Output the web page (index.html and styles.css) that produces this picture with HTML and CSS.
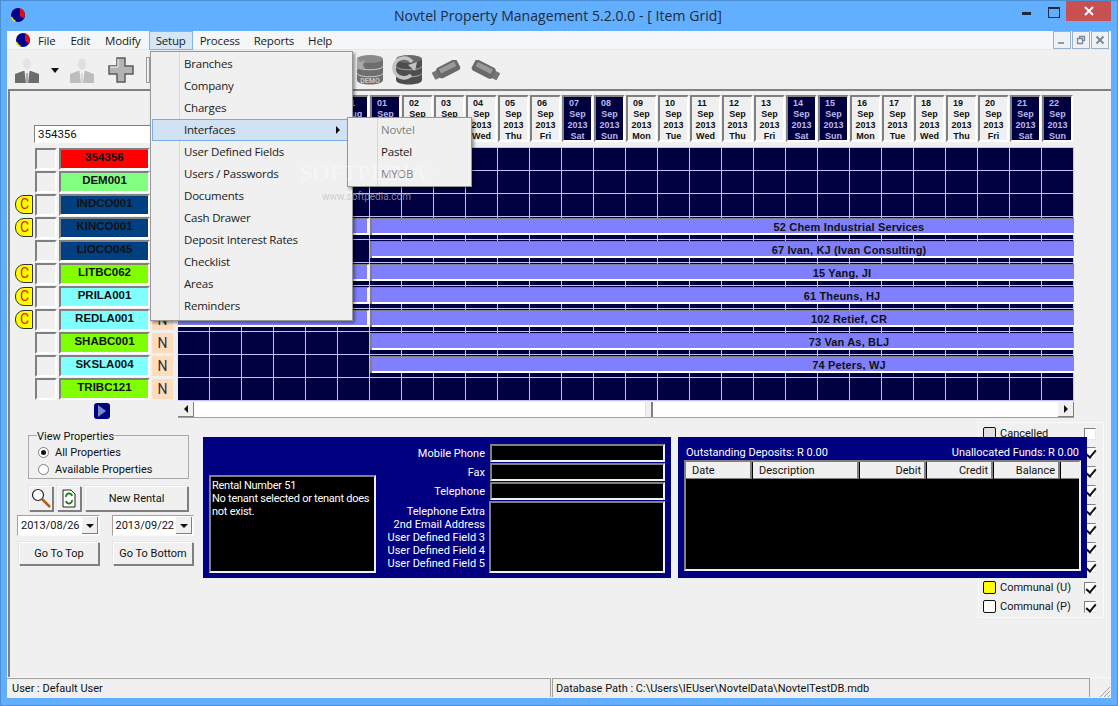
FILE: index.html
```html
<!DOCTYPE html>
<html lang="en">
<head>
    <meta charset="UTF-8">
    <title>Novtel Property Management</title>
    <link rel="stylesheet" href="styles.css">
</head>
<body>
<div class="window">
    <!-- title bar -->
    <div class="titlebar">
        <svg class="app-icon" width="16" height="16" viewBox="0 0 16 16"><circle cx="8" cy="8" r="7" fill="#000090"/><path d="M8 1a7 7 0 0 1 6 10.500L10 9V2z" fill="#e01010"/><path d="M1.500 10a7 7 0 0 0 4 4.500" fill="none" stroke="#f0e000" stroke-width="1.500"/></svg>
        <div class="title">Novtel Property Management 5.2.0.0 - [ Item Grid]</div>
        <div class="caption-buttons">
            <span class="cap-min"></span>
            <span class="cap-max"></span>
            <span class="cap-close"><svg width="12" height="10" viewBox="0 0 12 10"><path d="M2 1l8 8M10 1l-8 8" stroke="#fff" stroke-width="2"/></svg></span>
        </div>
    </div>

    <div class="mdi">
        <!-- menu -->
        <div class="menubar">
            <svg class="menu-icon" width="16" height="16" viewBox="0 0 16 16"><circle cx="8" cy="8" r="7" fill="#000090"/><path d="M8 1a7 7 0 0 1 6 10.500L10 9V2z" fill="#e01010"/><path d="M1.500 10a7 7 0 0 0 4 4.500" fill="none" stroke="#f0e000" stroke-width="1.500"/></svg>
            <span class="menu-item menu-wide">File</span>
            <span class="menu-item menu-wide">Edit</span>
            <span class="menu-item menu-wide">Modify</span>
            <span class="menu-item menu-active">Setup</span>
            <span class="menu-item">Process</span>
            <span class="menu-item">Reports</span>
            <span class="menu-item">Help</span>
            <div class="mdi-buttons">
                <span class="mdi-btn"><svg width="10" height="10" viewBox="0 0 10 10"><rect x="1" y="7" width="6" height="2" fill="#8a9aa8"/></svg></span>
                <span class="mdi-btn"><svg width="10" height="10" viewBox="0 0 10 10"><path d="M3.500 3V1.500h5v4H7M1.500 3.500h5v5h-5z" fill="none" stroke="#7a8a98" stroke-width="1.300"/></svg></span>
                <span class="mdi-btn"><svg width="10" height="10" viewBox="0 0 10 10"><path d="M1.500 1.500l7 7M8.500 1.500l-7 7" stroke="#7a8a98" stroke-width="2"/></svg></span>
            </div>
        </div>

        <!-- toolbar -->
        <div class="toolbar">
            <svg class="tool-person" width="24" height="26" viewBox="0 0 24 26"><ellipse cx="12" cy="6" rx="4" ry="5.500" fill="#e4e4e4"/><path d="M0 25V16l8-3h8l8 3v9z" fill="#6c6c6c"/><path d="M9.500 13h5L13 25h-2z" fill="#f0f0f0"/><path d="M12 15v10" stroke="#6c6c6c"/></svg>
            <span class="tool-arrow"></span>
            <svg class="tool-person2" width="24" height="26" viewBox="0 0 24 26"><ellipse cx="12" cy="6" rx="4" ry="5.500" fill="#dedede"/><path d="M0 25V16l8-3h8l8 3v9z" fill="#bdbdbd"/><path d="M9.500 13h5L13 25h-2z" fill="#f4f4f4"/><path d="M12 15v10" stroke="#bdbdbd"/></svg>
            <svg class="tool-plus" width="26" height="26" viewBox="0 0 26 26"><path d="M9 1h8v8h8v8h-8v8H9v-8H1V9h8z" fill="#b4b4b4" stroke="#5c5c5c" stroke-width="1.500"/><path d="M10 2v8H2" fill="none" stroke="#fff"/></svg>
            <span class="tool-clipped"></span>
            <svg class="tool-db" width="28" height="31" viewBox="0 0 28 31"><path d="M1 5v21c0 6 26 6 26 0V5z" fill="#6e6e6e"/><ellipse cx="14" cy="5" rx="13" ry="4" fill="#8a8a8a"/><path d="M1 12c0 5 26 5 26 0M1 19c0 5 26 5 26 0" fill="none" stroke="#d0d0d0"/><path d="M1 3l3 5 5-2-2 5 2 4-5-1-3 2z" fill="#a8a8a8"/><text x="14" y="29" class="db-text">DEMO</text></svg>
            <svg class="tool-db2" width="32" height="31" viewBox="0 0 32 31"><path d="M5 5v21c0 6 26 6 26 0V5z" fill="#4e4e4e"/><ellipse cx="18" cy="5" rx="13" ry="4" fill="#6a6a6a"/><path d="M5 12c0 5 26 5 26 0M5 19c0 5 26 5 26 0" fill="none" stroke="#a8a8a8"/><path d="M20 21A10 10 0 1 1 21 8" fill="none" stroke="#c4c4c4" stroke-width="3.500"/><path d="M17 11l9-3-2 9z" fill="#c4c4c4"/></svg>
            <svg class="tool-usb" width="29" height="20" viewBox="0 0 29 20"><g transform="rotate(-27 14 10)"><rect x="0" y="6" width="7" height="8" rx="1" fill="#777"/><rect x="5" y="4" width="23" height="12" rx="3" fill="#6a6a6a"/><rect x="8" y="6" width="17" height="5" fill="#9a9a9a"/></g></svg>
            <svg class="tool-usb2" width="29" height="20" viewBox="0 0 29 20"><g transform="rotate(27 14 10)"><rect x="22" y="6" width="7" height="8" rx="1" fill="#777"/><rect x="1" y="4" width="23" height="12" rx="3" fill="#6a6a6a"/><rect x="4" y="6" width="17" height="5" fill="#9a9a9a"/></g></svg>
        </div>

        <div class="content">
            <!-- item grid -->
            <div class="board">
                <div class="items">
                    <div class="search">354356</div>
                    <div class="item-row"><span class="badge-slot"></span><span class="tick-cell"></span><span class="code c-red">354356</span><span class="n-cell">N</span></div>
                    <div class="item-row"><span class="badge-slot"></span><span class="tick-cell"></span><span class="code c-mint">DEM001</span><span class="n-cell">N</span></div>
                    <div class="item-row"><span class="badge-slot badge">C</span><span class="tick-cell"></span><span class="code c-navy">INDCO001</span><span class="n-cell">N</span></div>
                    <div class="item-row"><span class="badge-slot badge">C</span><span class="tick-cell"></span><span class="code c-navy">KINCO001</span><span class="n-cell">N</span></div>
                    <div class="item-row"><span class="badge-slot"></span><span class="tick-cell"></span><span class="code c-navy">LIOCO045</span><span class="n-cell">N</span></div>
                    <div class="item-row"><span class="badge-slot badge">C</span><span class="tick-cell"></span><span class="code c-lime">LITBC062</span><span class="n-cell">N</span></div>
                    <div class="item-row"><span class="badge-slot badge">C</span><span class="tick-cell"></span><span class="code c-cyan">PRILA001</span><span class="n-cell">N</span></div>
                    <div class="item-row"><span class="badge-slot badge">C</span><span class="tick-cell"></span><span class="code c-cyan">REDLA001</span><span class="n-cell">N</span></div>
                    <div class="item-row"><span class="badge-slot"></span><span class="tick-cell"></span><span class="code c-lime">SHABC001</span><span class="n-cell">N</span></div>
                    <div class="item-row"><span class="badge-slot"></span><span class="tick-cell"></span><span class="code c-cyan">SKSLA004</span><span class="n-cell">N</span></div>
                    <div class="item-row"><span class="badge-slot"></span><span class="tick-cell"></span><span class="code c-lime">TRIBC121</span><span class="n-cell">N</span></div>
                    <div class="next-wrap"><span class="next-btn"><svg width="8" height="12" viewBox="0 0 8 12"><path d="M0 0l8 6-8 6z" fill="#7a86c8"/></svg></span></div>
                </div>

                <div class="schedule">
                    <div class="days">
                        <div class="day"><b>26</b>Aug<br>2013<br>Mon</div>
                        <div class="day"><b>27</b>Aug<br>2013<br>Tue</div>
                        <div class="day"><b>28</b>Aug<br>2013<br>Wed</div>
                        <div class="day"><b>29</b>Aug<br>2013<br>Thu</div>
                        <div class="day"><b>30</b>Aug<br>2013<br>Fri</div>
                        <div class="day off"><b>31</b>Aug<br>2013<br>Sat</div>
                        <div class="day off"><b>01</b>Sep<br>2013<br>Sun</div>
                        <div class="day"><b>02</b>Sep<br>2013<br>Mon</div>
                        <div class="day"><b>03</b>Sep<br>2013<br>Tue</div>
                        <div class="day"><b>04</b>Sep<br>2013<br>Wed</div>
                        <div class="day"><b>05</b>Sep<br>2013<br>Thu</div>
                        <div class="day"><b>06</b>Sep<br>2013<br>Fri</div>
                        <div class="day off"><b>07</b>Sep<br>2013<br>Sat</div>
                        <div class="day off"><b>08</b>Sep<br>2013<br>Sun</div>
                        <div class="day"><b>09</b>Sep<br>2013<br>Mon</div>
                        <div class="day"><b>10</b>Sep<br>2013<br>Tue</div>
                        <div class="day"><b>11</b>Sep<br>2013<br>Wed</div>
                        <div class="day"><b>12</b>Sep<br>2013<br>Thu</div>
                        <div class="day"><b>13</b>Sep<br>2013<br>Fri</div>
                        <div class="day off"><b>14</b>Sep<br>2013<br>Sat</div>
                        <div class="day off"><b>15</b>Sep<br>2013<br>Sun</div>
                        <div class="day"><b>16</b>Sep<br>2013<br>Mon</div>
                        <div class="day"><b>17</b>Sep<br>2013<br>Tue</div>
                        <div class="day"><b>18</b>Sep<br>2013<br>Wed</div>
                        <div class="day"><b>19</b>Sep<br>2013<br>Thu</div>
                        <div class="day"><b>20</b>Sep<br>2013<br>Fri</div>
                        <div class="day off"><b>21</b>Sep<br>2013<br>Sat</div>
                        <div class="day off"><b>22</b>Sep<br>2013<br>Sun</div>
                    </div>
                    <div class="lanes">
                        <div class="lane"></div>
                        <div class="lane"></div>
                        <div class="lane"></div>
                        <div class="lane"><div class="bar-past"></div><div class="bar">52 Chem Industrial Services</div></div>
                        <div class="lane"><div class="bar-gap"></div><div class="bar">67 Ivan, KJ (Ivan Consulting)</div></div>
                        <div class="lane"><div class="bar-past"></div><div class="bar short">15 Yang, JI</div></div>
                        <div class="lane"><div class="bar-past"></div><div class="bar short">61 Theuns, HJ</div></div>
                        <div class="lane"><div class="bar-past"></div><div class="bar">102 Retief, CR</div></div>
                        <div class="lane"><div class="bar-gap"></div><div class="bar">73 Van As, BLJ</div></div>
                        <div class="lane"><div class="bar-gap"></div><div class="bar">74 Peters, WJ</div></div>
                        <div class="lane"></div>
                    </div>
                    <div class="hscroll">
                        <span class="scroll-btn"><i class="arrow-left"></i></span>
                        <span class="scroll-track"><span class="scroll-thumb"></span></span>
                        <span class="scroll-btn"><i class="arrow-right"></i></span>
                    </div>
                </div>
            </div>

            <!-- lower panels -->
            <div class="lower">
                <div class="controls">
                    <fieldset class="view-props">
                        <legend>View Properties</legend>
                        <div class="radio-row"><span class="radio checked"></span>All Properties</div>
                        <div class="radio-row"><span class="radio"></span>Available Properties</div>
                    </fieldset>
                    <div class="action-row">
                        <span class="btn btn-icon"><svg width="20" height="21" viewBox="0 0 20 21"><circle cx="7" cy="7" r="5.500" fill="#fff" stroke="#222" stroke-width="1.200"/><path d="M11 11l8 8" stroke="#b06018" stroke-width="2.500"/></svg></span>
                        <span class="btn btn-icon"><svg width="14" height="19" viewBox="0 0 14 19"><path d="M1 1h8l4 4v13H1z" fill="#fff" stroke="#222"/><path d="M4 8a3 3 0 0 1 6-1M10 11a3 3 0 0 1-6 1" fill="none" stroke="#108010" stroke-width="1.800"/></svg></span>
                        <span class="btn btn-new">New Rental</span>
                    </div>
                    <div class="date-row">
                        <span class="combo">2013/08/26<i class="combo-btn"></i></span>
                        <span class="combo">2013/09/22<i class="combo-btn"></i></span>
                    </div>
                    <div class="goto-row">
                        <span class="btn btn-goto">Go To Top</span>
                        <span class="btn btn-goto">Go To Bottom</span>
                    </div>
                </div>

                <div class="panel tenant-panel">
                    <div class="tenant-memo">Rental Number 51<br>No tenant selected or tenant does not exist.</div>
                    <div class="contact">
                        <div class="contact-row"><label>Mobile Phone</label><span class="field"></span></div>
                        <div class="contact-row"><label>Fax</label><span class="field"></span></div>
                        <div class="contact-row"><label>Telephone</label><span class="field"></span></div>
                        <div class="contact-row contact-big">
                            <label>Telephone Extra<br>2nd Email Address<br>User Defined Field 3<br>User Defined Field 4<br>User Defined Field 5</label>
                            <span class="field field-big"></span>
                        </div>
                    </div>
                </div>

                <div class="panel funds-panel">
                    <div class="funds-head"><span>Outstanding Deposits: R 0.00</span><span>Unallocated Funds: R 0.00</span></div>
                    <div class="ledger">
                        <div class="ledger-head">
                            <span class="col-date">Date</span>
                            <span class="col-desc">Description</span>
                            <span class="col-num">Debit</span>
                            <span class="col-num">Credit</span>
                            <span class="col-num">Balance</span>
                            <span class="col-end"></span>
                        </div>
                    </div>
                </div>

                <div class="legend-box">
                    <div class="key"><span class="swatch s-grey"></span><span class="key-name">Cancelled</span><span class="check"></span></div>
                    <div class="key"><span class="check on"></span></div>
                    <div class="key"><span class="check on"></span></div>
                    <div class="key"><span class="check on"></span></div>
                    <div class="key"><span class="check on"></span></div>
                    <div class="key"><span class="check on"></span></div>
                    <div class="key"><span class="check on"></span></div>
                    <div class="key"><span class="check on"></span></div>
                    <div class="key key-u"><span class="swatch s-yellow"></span><span class="key-name">Communal (U)</span><span class="check on"></span></div>
                    <div class="key"><span class="swatch"></span><span class="key-name">Communal (P)</span><span class="check on"></span></div>
                </div>
            </div>

            <!-- open Setup menu -->
            <div class="dropdown">
                <div class="drop-item">Branches</div>
                <div class="drop-item">Company</div>
                <div class="drop-item">Charges</div>
                <div class="drop-item drop-hot">Interfaces<i class="drop-arrow"></i></div>
                <div class="drop-item">User Defined Fields</div>
                <div class="drop-item">Users / Passwords</div>
                <div class="drop-item">Documents</div>
                <div class="drop-item">Cash Drawer</div>
                <div class="drop-item">Deposit Interest Rates</div>
                <div class="drop-item">Checklist</div>
                <div class="drop-item">Areas</div>
                <div class="drop-item">Reminders</div>
            </div>
            <div class="submenu">
                <div class="sub-item sub-off">Novtel</div>
                <div class="sub-item">Pastel</div>
                <div class="sub-item sub-off">MYOB</div>
            </div>
            <div class="watermark">SOFTPEDIA<sup>™</sup></div>
            <div class="watermark-url">www.softpedia.com</div>
        </div>

        <!-- status bar -->
        <div class="statusbar">
            <span class="status-user">User : Default User</span>
            <span class="status-db">Database Path : C:\Users\IEUser\NovtelData\NovtelTestDB.mdb</span>
            <svg class="grip" width="12" height="12" viewBox="0 0 12 12"><path d="M11 1L1 11M11 5l-6 6M11 9l-2 2" stroke="#a0a0a0"/></svg>
        </div>
    </div>
</div>
</body>
</html>
```

FILE: styles.css
```css
* {
    box-sizing: border-box;
}
html, body {
    margin: 0;
    padding: 0;
}
body {
    width: 1118px;
    height: 706px;
    overflow: hidden;
    font-family: Roboto, "Liberation Sans", sans-serif;
    font-size: 11px;
    color: #111;
}
.window {
    width: 1118px;
    height: 706px;
    background-color: #62aeff;
    border: 1px solid #4a8fd4;
    display: flex;
    flex-direction: column;
}
.titlebar {
    height: 30px;
    display: flex;
    align-items: flex-start;
    position: relative;
}
.app-icon {
    margin: 6px 0 0 9px;
}
.title {
    position: absolute;
    left: 393px;
    top: 5px;
    font-family: "Open Sans", sans-serif;
    font-size: 14px;
    letter-spacing: 0.05px;
    line-height: 20px;
    color: #1d2b38;
    white-space: nowrap;
}
.caption-buttons {
    margin-left: auto;
    margin-right: 6px;
    display: flex;
    height: 20px;
}
.cap-min, .cap-max {
    width: 27px;
    position: relative;
}
.cap-min::after {
    content: "";
    position: absolute;
    left: 10px;
    top: 11px;
    width: 9px;
    height: 3px;
    background-color: #1d2b38;
}
.cap-max::after {
    content: "";
    position: absolute;
    left: 9px;
    top: 6px;
    width: 10px;
    height: 8px;
    border: 1px solid #1d2b38;
    border-top-width: 2px;
}
.cap-close {
    width: 45px;
    background-color: #c75050;
    display: flex;
    align-items: center;
    justify-content: center;
}

.mdi {
    margin: 0 6px 7px 6px;
    height: 667px;
    background-color: #f0f0f0;
    display: flex;
    flex-direction: column;
}
.menubar {
    height: 19px;
    background-color: #f5f6f7;
    display: flex;
    align-items: center;
    border-bottom: 1px solid #e8e8e8;
}
.menu-icon {
    margin-left: 8px;
}
.menu-item {
    padding: 0 7px;
    line-height: 19px;
    height: 19px;
    font-family: "Open Sans", sans-serif;
    font-size: 11.500px;
    letter-spacing: -0.2px;
    color: #1a1a1a;
}
.menu-wide {
    padding-right: 8px;
}
.menu-active {
    background-color: #d5e6f7;
    box-shadow: inset 0 0 0 1px #7eb4ea;
}
.mdi-buttons {
    margin-left: auto;
    margin-right: 2px;
    display: flex;
    gap: 1px;
}
.mdi-btn {
    width: 18px;
    height: 18px;
    border: 1px solid #9ab2c8;
    background-color: #eef2f6;
    display: flex;
    align-items: center;
    justify-content: center;
}

.toolbar {
    height: 39px;
    display: flex;
    align-items: flex-start;
    background-color: #f0f0f0;
}
.toolbar svg {
    flex: none;
}
.tool-person {
    margin: 8px 0 0 8px;
}
.tool-arrow {
    margin: 18px 0 0 12px;
    width: 0;
    height: 0;
    border-left: 4px solid transparent;
    border-right: 4px solid transparent;
    border-top: 5px solid #111;
}
.tool-person2 {
    margin: 8px 0 0 11px;
}
.tool-plus {
    margin: 7px 0 0 14px;
}
.tool-clipped {
    margin: 7px 0 0 12px;
    width: 4px;
    height: 26px;
    border: 1px solid #9a9a9a;
}
.tool-db {
    margin: 4px 0 0 206px;
}
.tool-db2 {
    margin: 4px 0 0 7px;
}
.tool-usb {
    margin: 10px 0 0 9px;
}
.tool-usb2 {
    margin: 10px 0 0 10px;
}
.db-text {
    font-size: 7px;
    font-weight: bold;
    fill: #c8c8c8;
    text-anchor: middle;
}

.content {
    flex: 1;
    position: relative;
    margin-left: 1px;
    border-top: 2px solid #808080;
    border-left: 2px solid #808080;
}
.board {
    display: flex;
    padding-top: 4px;
}
.items {
    width: 168px;
    flex: none;
}
.search {
    margin: 30px 0 5px 24px;
    height: 18px;
    width: 140px;
    background-color: #fff;
    border: 1px solid;
    border-color: #808080 #fff #fff #808080;
    padding-left: 3px;
    line-height: 17px;
    font-size: 11.500px;
}
.item-row {
    height: 23px;
    display: flex;
    align-items: flex-start;
}
.badge-slot {
    width: 18px;
    height: 19px;
    margin: 1px 2px 0 5px;
    flex: none;
}
.badge {
    background-color: #ffff00;
    border: 1px solid #333;
    border-radius: 9px 1px 1px 9px;
    color: #e02000;
    font-size: 14px;
    line-height: 17px;
    text-align: center;
    padding-left: 1px;
}
.tick-cell {
    width: 22px;
    height: 22px;
    flex: none;
    border: 2px solid;
    border-color: #808080 #fff #fff #808080;
}
.code {
    width: 91px;
    height: 22px;
    flex: none;
    margin-left: 2px;
    border: 2px solid;
    border-color: #808080 #fff #fff #808080;
    font-family: "Liberation Sans", sans-serif;
    font-weight: bold;
    font-size: 11.500px;
    line-height: 15px;
    text-align: center;
}
.c-red { background-color: #ff0000; }
.c-mint { background-color: #80ff80; }
.c-navy { background-color: #004080; }
.c-lime { background-color: #80ff00; }
.c-cyan { background-color: #80ffff; }
.n-cell {
    width: 23px;
    height: 22px;
    flex: none;
    margin-left: 1px;
    background-color: #ffdcbc;
    border: 1px solid #f0f0f0;
    font-size: 14px;
    line-height: 21px;
    text-align: center;
    color: #333;
}
.next-wrap {
    height: 17px;
    padding: 2px 0 0 84px;
}
.next-btn {
    display: flex;
    width: 16px;
    height: 16px;
    background-color: #000080;
    border-radius: 3px;
    align-items: center;
    justify-content: center;
}

.schedule {
    width: 896px;
    flex: none;
}
.days {
    display: flex;
    height: 48px;
}
.day {
    width: 31px;
    height: 47px;
    margin-right: 1px;
    border: 2px solid;
    border-color: #808080 #fff #fff #808080;
    background-color: #f0f0f0;
    font-family: "Liberation Sans", sans-serif;
    font-size: 9px;
    line-height: 11px;
    text-align: center;
    color: #111;
    font-weight: bold;
    padding-top: 1px;
    overflow: hidden;
}
.day b {
    display: block;
    padding-right: 7px;
}
.day.off {
    background-color: #000040;
    color: #b8b8e8;
}
.lanes {
    margin-top: 4px;
    border-top: 1px solid #c0c0ff;
    background-color: #000040;
    background-image:
        linear-gradient(90deg, transparent 31px, #c0c0ff 31px),
        linear-gradient(180deg, transparent 22px, #c0c0ff 22px);
    background-size: 32px 23px;
}
.lane {
    height: 23px;
    padding-top: 1px;
    display: flex;
    align-items: flex-start;
}
.bar-past {
    width: 192px;
    height: 17px;
    background-color: #8080ff;
    border-right: 3px solid #f4f4f4;
    border-bottom: 2px solid #fff;
    border-top: 1px solid #808080;
    flex: none;
}
.bar-gap {
    width: 192px;
    flex: none;
}
.bar {
    flex: 1;
    height: 17px;
    background-color: #8080ff;
    border: solid #808080;
    border-width: 1px 0 0 2px;
    box-shadow: inset 0 -2px 0 #fff;
    font-family: "Liberation Sans", sans-serif;
    font-weight: bold;
    font-size: 11px;
    letter-spacing: 0.15px;
    line-height: 17px;
    color: #111;
    text-align: center;
    padding-left: 252px;
}
.bar.short {
    padding-left: 238px;
}
.hscroll {
    margin-top: 1px;
    height: 16px;
    display: flex;
    border-bottom: 1px solid #a0a0a0;
    background-color: #fff;
}
.scroll-btn {
    width: 16px;
    flex: none;
    height: 15px;
    background-color: #f0f0f0;
    border-right: 1px solid #808080;
    border-bottom: 1px solid #808080;
    display: flex;
    align-items: center;
    justify-content: center;
}
.arrow-left, .arrow-right {
    width: 0;
    height: 0;
    border-top: 4px solid transparent;
    border-bottom: 4px solid transparent;
}
.arrow-left {
    border-right: 4px solid #111;
}
.arrow-right {
    border-left: 4px solid #111;
}
.scroll-track {
    flex: 1;
    display: block;
    padding-left: 451px;
}
.scroll-thumb {
    display: block;
    width: 8px;
    height: 15px;
    background-color: #f0f0f0;
    border-right: 2px solid #808080;
    border-left: 1px solid #e0e0e0;
}

.lower {
    display: flex;
    align-items: flex-start;
    padding: 4px 0 0 7px;
}
.controls {
    width: 177px;
    flex: none;
    margin-top: 7px;
}
.view-props {
    margin: 0 0 0 11px;
    width: 161px;
    height: 50px;
    padding: 2px 0 0 9px;
    border: 1px solid #a8a8a8;
}
.view-props legend {
    padding: 0;
    line-height: 13px;
    margin-left: -1px;
    position: relative;
    top: 1px;
}
.radio-row {
    display: flex;
    align-items: center;
    height: 17px;
}
.radio {
    width: 11px;
    height: 11px;
    border: 1px solid #808080;
    border-radius: 50%;
    background-color: #fff;
    margin-right: 6px;
    position: relative;
}
.radio.checked::after {
    content: "";
    position: absolute;
    left: 2px;
    top: 2px;
    width: 5px;
    height: 5px;
    border-radius: 50%;
    background-color: #111;
}
.btn {
    display: flex;
    align-items: center;
    justify-content: center;
    background-color: #f0f0f0;
    border: 1px solid;
    border-color: #fff #808080 #808080 #fff;
    box-shadow: 1px 1px 0 #808080, -1px -1px 0 #e4e4e4;
}
.action-row {
    display: flex;
    margin: 7px 0 0 12px;
    gap: 4px;
}
.btn-icon {
    width: 24px;
    height: 25px;
}
.btn-new {
    width: 103px;
    height: 25px;
}
.date-row {
    display: flex;
    gap: 12px;
    margin-top: 4px;
}
.combo {
    width: 83px;
    height: 21px;
    background-color: #fff;
    border: 1px solid;
    border-color: #a0a0a0 #f8f8f8 #f8f8f8 #a0a0a0;
    display: flex;
    align-items: center;
    padding-left: 3px;
    justify-content: space-between;
    padding-right: 1px;
}
.combo-btn {
    width: 16px;
    height: 17px;
    background-color: #f0f0f0;
    border-right: 1px solid #808080;
    border-bottom: 1px solid #808080;
    position: relative;
}
.combo-btn::after {
    content: "";
    position: absolute;
    left: 4px;
    top: 7px;
    border-left: 4px solid transparent;
    border-right: 4px solid transparent;
    border-top: 4px solid #111;
}
.goto-row {
    display: flex;
    gap: 14px;
    margin: 6px 0 0 2px;
}
.btn-goto {
    width: 80px;
    height: 23px;
}

.panel {
    position: relative;
    z-index: 1;
    margin-top: 15px;
    height: 141px;
    background-color: #000080;
    color: #fff;
    flex: none;
}
.tenant-panel {
    width: 468px;
    margin-left: 9px;
    padding: 7px 6px 5px 6px;
    display: flex;
    align-items: flex-end;
}
.tenant-memo {
    width: 167px;
    height: 98px;
    flex: none;
    background-color: #000;
    border: 2px solid;
    border-color: #808080 #f0f0f0 #f0f0f0 #808080;
    padding: 2px 0 0 1px;
    line-height: 13px;
    letter-spacing: -0.25px;
}
.contact {
    flex: 1;
    display: flex;
    flex-direction: column;
    gap: 1px;
}
.contact-row {
    display: flex;
    align-items: center;
    justify-content: flex-end;
    height: 18px;
}
.contact-row label {
    margin-right: 5px;
    text-align: right;
}
.field {
    width: 175px;
    height: 18px;
    background-color: #000;
    border: 2px solid;
    border-color: #808080 #f0f0f0 #f0f0f0 #808080;
}
.contact-big {
    height: 72px;
}
.contact-big label {
    line-height: 13px;
    margin-right: 4px;
    padding-top: 1px;
}
.field-big {
    width: 176px;
    height: 72px;
}
.funds-panel {
    width: 409px;
    margin-left: 7px;
    padding: 8px 6px 0 6px;
}
.funds-head {
    display: flex;
    justify-content: space-between;
    padding: 0 2px;
    height: 15px;
    line-height: 15px;
}
.ledger {
    height: 111px;
    background-color: #000;
    border: 2px solid;
    border-color: #808080 #f0f0f0 #f0f0f0 #808080;
}
.ledger-head {
    display: flex;
    height: 17px;
    color: #111;
    line-height: 18px;
}
.ledger-head span {
    background-color: #f0f0f0;
    border-right: 2px solid #808080;
    border-bottom: 1px solid #808080;
    margin-right: 1px;
}
.col-date {
    width: 66px;
    padding-left: 6px;
}
.col-desc {
    width: 106px;
    padding-left: 6px;
}
.col-num {
    width: 66px;
    text-align: right;
    padding-right: 3px;
}
.ledger-head .col-end {
    flex: 1;
    margin-right: 0;
    border-right: 0;
}

.legend-box {
    margin-left: -109px;
    width: 126px;
    height: 196px;
    flex: none;
    border: 1px solid #fafafa;
    padding: 1px 7px 0 4px;
}
.key {
    height: 19px;
    display: flex;
    align-items: center;
    justify-content: flex-end;
}
.key-u {
    margin-top: 2px;
}
.key-name {
    flex: 1;
    padding-left: 4px;
}
.swatch {
    width: 13px;
    height: 13px;
    flex: none;
    border: 1px solid #111;
    border-radius: 2px;
    background-color: #fff;
}
.s-grey {
    background-color: #e0e0e0;
}
.s-yellow {
    background-color: #ffff00;
}
.check {
    width: 12px;
    height: 12px;
    flex: none;
    border: 1px solid;
    border-color: #808080 #e8e8e8 #e8e8e8 #808080;
    background-color: #fff;
    position: relative;
}
.check.on::after {
    content: "";
    position: absolute;
    left: 3px;
    top: 0;
    width: 4px;
    height: 8px;
    border: solid #111;
    border-width: 0 2px 2px 0;
    transform: rotate(40deg);
}

.dropdown, .submenu {
    position: absolute;
    z-index: 5;
    background-color: #f0f0f0;
    border: 1px solid #979797;
    box-shadow: 2px 2px 3px rgba(0, 0, 0, 0.4);
    font-family: "Open Sans", sans-serif;
    font-size: 11.500px;
    letter-spacing: -0.2px;
}
.dropdown {
    left: 140px;
    top: -40px;
    width: 203px;
    height: 270px;
    padding: 1px 1px 0 1px;
    background-image: linear-gradient(90deg, #f0f0f0 28px, #d8d8d8 28px, #d8d8d8 29px, #f0f0f0 29px);
}
.drop-item {
    height: 22px;
    line-height: 22px;
    padding-left: 32px;
    color: #1a1a1a;
    position: relative;
}
.drop-hot {
    background-color: #d1e2f2;
    box-shadow: inset 0 0 0 1px #78aee5;
}
.drop-arrow {
    position: absolute;
    right: 11px;
    top: 7px;
    border-top: 4px solid transparent;
    border-bottom: 4px solid transparent;
    border-left: 4px solid #111;
}
.submenu {
    left: 337px;
    top: 26px;
    width: 125px;
    height: 70px;
    padding-top: 1px;
    background-image: linear-gradient(90deg, #f0f0f0 29px, #d8d8d8 29px, #d8d8d8 30px, #f0f0f0 30px);
}
.sub-item {
    height: 22px;
    line-height: 22px;
    padding-left: 33px;
    color: #1a1a1a;
}
.sub-off {
    color: #808080;
}
.watermark {
    position: absolute;
    z-index: 6;
    left: 290px;
    top: 69px;
    font-family: "Liberation Serif", serif;
    font-size: 22px;
    letter-spacing: 1px;
    color: rgba(255, 255, 255, 0.45);
    white-space: nowrap;
}
.watermark sup {
    font-size: 8px;
}
.watermark-url {
    position: absolute;
    z-index: 6;
    left: 312px;
    top: 100px;
    font-size: 10px;
    color: rgba(190, 190, 190, 0.7);
    white-space: nowrap;
}

.statusbar {
    height: 21px;
    display: flex;
    align-items: flex-end;
    border-top: 1px solid #fafafa;
    position: relative;
    padding-bottom: 1px;
}
.status-user {
    width: 544px;
    height: 19px;
    line-height: 19px;
    padding-left: 5px;
    border-top: 1px solid #a0a0a0;
    border-right: 1px solid #a0a0a0;
    margin-right: 1px;
}
.status-db {
    width: 538px;
    height: 19px;
    line-height: 19px;
    padding-left: 3px;
    border-top: 1px solid #a0a0a0;
    border-left: 1px solid #a0a0a0;
    border-right: 1px solid #a0a0a0;
}
.grip {
    position: absolute;
    right: 0;
    bottom: 0;
}
```
